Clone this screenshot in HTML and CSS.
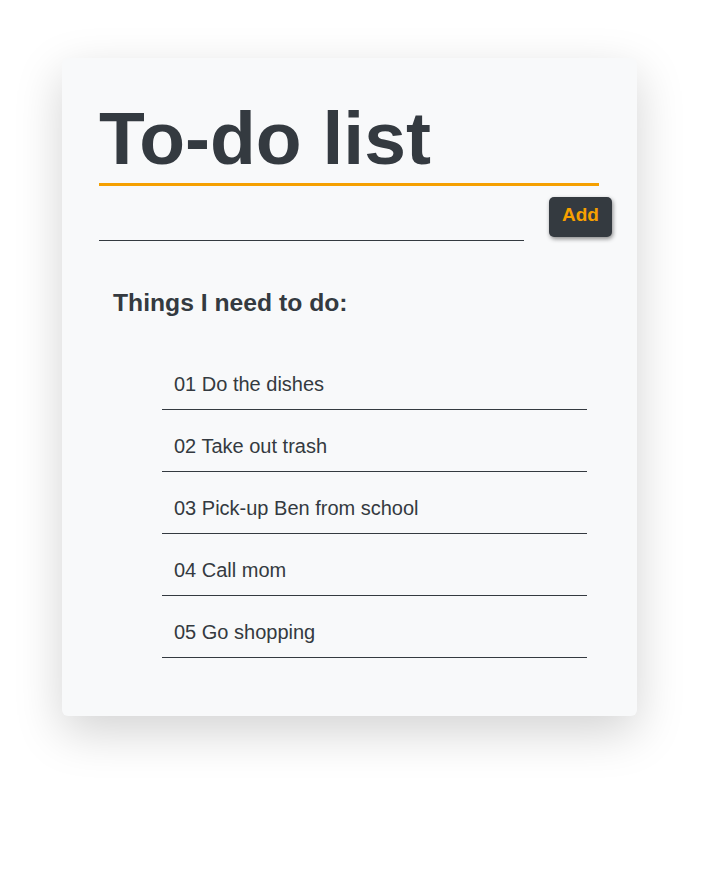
FILE: index.html
```html
<!DOCTYPE html>
<html lang="en">
<head>
<meta charset="utf-8">
<title>To-do list</title>
<link rel="stylesheet" href="styles.css">
</head>
<body>
<main class="page">
  <section class="card">
    <h1 class="title">To-do list</h1>
    <form class="add-row" onsubmit="return false;">
      <input class="task-input" type="text" aria-label="New task">
      <button class="add-btn" type="submit">Add</button>
    </form>
    <h2 class="list-heading">Things I need to do:</h2>
    <ul class="task-list">
      <li class="task">01 Do the dishes</li>
      <li class="task">02 Take out trash</li>
      <li class="task">03 Pick-up Ben from school</li>
      <li class="task">04 Call mom</li>
      <li class="task">05 Go shopping</li>
    </ul>
  </section>
</main>
</body>
</html>
```
FILE: styles.css
```css
* { box-sizing: border-box; }

html, body {
  margin: 0;
  padding: 0;
  background: #ffffff;
}

body {
  font-family: "Liberation Sans", Arial, sans-serif;
  color: #343a40;
}

.page {
  min-height: 871px;
  padding: 58px 0 120px 62px;
}

.card {
  width: 575px;
  background: #f8f9fa;
  border-radius: 6px;
  padding: 37px 38px 37px 37px;
  box-shadow: 0 1rem 3rem rgba(0, 0, 0, 0.175);
}

.title {
  margin: 0;
  font-size: 75px;
  line-height: 86px;
  font-weight: 700;
  color: #343a40;
  padding-bottom: 2px;
  border-bottom: 3px solid #f5a000;
}

.add-row {
  display: flex;
  align-items: flex-start;
  gap: 25px;
  margin: 11px 0 0 0;
}

.task-input {
  flex: 0 0 425px;
  width: 425px;
  height: 44px;
  border: none;
  border-bottom: 1px solid #343a40;
  background: transparent;
  outline: none;
  font-family: inherit;
  font-size: 20px;
  color: #343a40;
  padding: 0;
}

.add-btn {
  flex: 0 0 63px;
  width: 63px;
  height: 40px;
  border: none;
  border-radius: 5px;
  background: #343a40;
  color: #f7a000;
  font-family: "Liberation Sans", Arial, sans-serif;
  font-weight: 700;
  font-size: 19px;
  padding: 0 0 5px 0;
  box-shadow: 1px 2px 4px rgba(0, 0, 0, 0.45);
  cursor: pointer;
}

.list-heading {
  margin: 48px 0 0 14px;
  font-size: 24.7px;
  line-height: 27px;
  font-weight: 700;
  color: #343a40;
}

.task-list {
  list-style: none;
  margin: 32px 0 21px 0;
  padding: 0 12px 0 63px;
}

.task {
  font-size: 20px;
  line-height: 23px;
  padding: 25px 12px 13px;
  border-bottom: 1px solid #343a40;
  color: #343a40;
}
```
